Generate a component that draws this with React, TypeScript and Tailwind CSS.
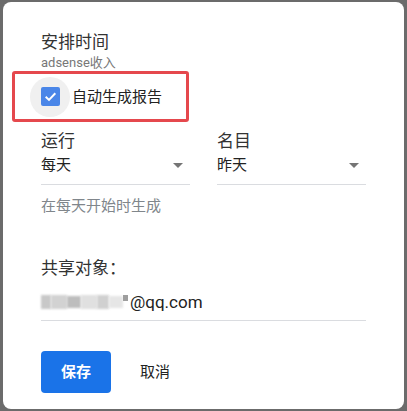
import React from "react";

const font = { fontFamily: 'Roboto, "Noto Sans CJK SC", "Noto Sans", sans-serif' };

function Arrow() {
  return (
    <svg width="10" height="5" viewBox="0 0 10 5" className="shrink-0">
      <polygon points="0,0 10,0 5,5" fill="#757575" />
    </svg>
  );
}

function Select({ label, value }: { label: string; value: string }) {
  return (
    <div className="w-[149px] flex flex-col">
      <div className="h-[20px] leading-[20px] text-[17px] text-[#333333]">{label}</div>
      <div className="mt-[4px] h-[30px] pb-[9px] border-b border-[#dadce0] flex items-start justify-between pr-[7px]">
        <span className="h-[20px] leading-[20px] text-[15px] text-[#222222]">{value}</span>
        <span className="h-[20px] flex items-center"><Arrow /></span>
      </div>
    </div>
  );
}

export default function App() {
  return (
    <div className="w-[407px] h-[411px] bg-[#6b6b6b] pt-[2px] pl-[3px]" style={font}>
      <div className="w-[401px] h-[407px] bg-white rounded-[8px] pl-[38px] pt-[30px] flex flex-col">
        <div className="h-[20px] leading-[20px] text-[17px] text-[#333333]">安排时间</div>
        <div className="mt-[3px] h-[16px] leading-[16px] text-[13px] text-[#777777]">adsense收入</div>
        <div className="-ml-[29px] w-[177px] h-[51px] border-[3px] border-[#e5484d] rounded-[3px] flex items-center pl-[15px]">
          <div className="w-[40px] h-[40px] rounded-full bg-[#f0f0f0] flex items-center justify-center shrink-0">
            <div className="w-[19px] h-[19px] rounded-[2px] bg-[#4a86e8] flex items-center justify-center">
              <svg width="15" height="15" viewBox="0 0 14 14">
                <polyline points="2.5,7.2 5.6,10.2 11.5,4" fill="none" stroke="white" strokeWidth="1.8" />
              </svg>
            </div>
          </div>
          <span className="ml-[2px] text-[15px] leading-[20px] text-[#222222]">自动生成报告</span>
        </div>
        <div className="mt-[9px] flex gap-[27px]">
          <Select label="运行" value="每天" />
          <Select label="名目" value="昨天" />
        </div>
        <div className="mt-[12px] h-[18px] leading-[18px] text-[15px] text-[#80868b]">在每天开始时生成</div>
        <div className="mt-[43px] h-[20px] leading-[20px] text-[17px] text-[#333333]">共享对象：</div>
        <div className="mt-[13px] w-[325px] h-[30px] pb-[7px] border-b border-[#dadce0] flex items-center">
          <span className="relative inline-flex items-center w-[89px] h-[22px]">
            <span className="block w-[10px] h-[14px] bg-[#c8c8c8] blur-[1px]" />
            <span className="block w-[16px] h-[14px] bg-[#d2d2d2] blur-[1px]" />
            <span className="block w-[14px] h-[12px] bg-[#bdbdbd] blur-[1px]" />
            <span className="block w-[16px] h-[14px] bg-[#e0e0e0] blur-[1px]" />
            <span className="block w-[12px] h-[14px] bg-[#d0d0d0] blur-[1px]" />
            <span className="block w-[14px] h-[12px] bg-[#e6e6e6] blur-[1px]" />
            <span className="block w-[5px] h-[6px] -mt-[8px] bg-[#9e9e9e] blur-[0.5px]" />
          </span>
          <span className="h-[22px] leading-[22px] text-[17px] text-[#222222]">@qq.com</span>
        </div>
        <div className="mt-[30px] flex items-center">
          <button className="w-[70px] h-[42px] rounded-[4px] bg-[#1a73e8] text-white text-[15px] font-bold">保存</button>
          <button className="ml-[29px] h-[42px] text-[15px] text-[#222222]">取消</button>
        </div>
      </div>
    </div>
  );
}
